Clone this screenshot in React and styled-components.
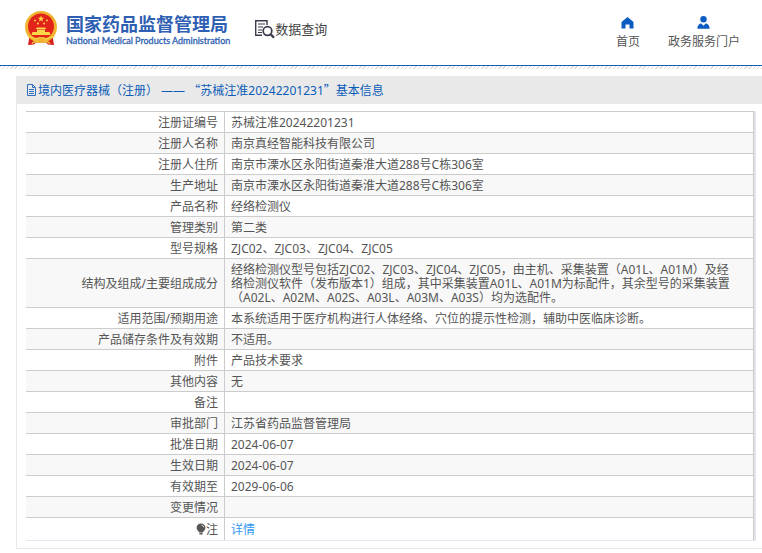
import React from "react";
import styled, { createGlobalStyle } from "styled-components";

const GlobalStyle = createGlobalStyle`
  *, *::before, *::after { box-sizing: border-box; }
  body {
    margin: 0;
    background: #fff;
    color: #555;
    font: 12px/14px "Noto Sans", "Noto Sans CJK SC", sans-serif;
    text-spacing-trim: space-all;
  }
`;

const Header = styled.header`
  display: flex;
  align-items: flex-start;
  justify-content: space-between;
  height: 66px;
  padding: 11px 22px 0 24px;
  border-bottom: 1px solid #1560b4;
`;

const Hatch = styled.div`
  height: 3px;
  background: repeating-linear-gradient(135deg, #e2dcd9 0 1px, #fff 1px 3px);
`;

const Brand = styled.div`
  display: flex;
  align-items: flex-start;
`;

const HomeLink = styled.a`
  display: flex;
  gap: 8px;
  color: #2f5fb3;
  text-decoration: none;
`;

const Names = styled.span`
  display: flex;
  flex-direction: column;
  padding-top: 2px;
`;

const AgencyName = styled.span`
  font-size: 18px;
  line-height: 22px;
  font-weight: 700;
  white-space: nowrap;
`;

const AgencyLatin = styled.span`
  font: 9px/12px Lato, "Liberation Sans", sans-serif;
  -webkit-text-stroke: 0.3px currentColor;
  white-space: nowrap;
`;

const Section = styled.div`
  display: flex;
  align-items: center;
  margin-left: 25px;
  padding-top: 8px;
  color: #444;
  font-size: 13px;
  line-height: 20px;
  white-space: nowrap;
`;

const Nav = styled.nav`
  display: flex;
  gap: 28px;
  padding-top: 5px;
`;

const NavLink = styled.a`
  display: flex;
  flex-direction: column;
  align-items: center;
  gap: 6px;
  color: #555;
  text-decoration: none;
  white-space: nowrap;
`;

const Panel = styled.main`
  margin: 7px 0 0 16px;
  padding-bottom: 7px;
  border-left: 1px solid #e9e9e9;
  border-bottom: 1px solid #e9e9e9;
`;

const Title = styled.h1`
  display: flex;
  align-items: center;
  gap: 1px;
  height: 28px;
  margin: 0 0 7px;
  padding: 0 0 0 9px;
  background: #e9e9e9;
  color: #0b5cb8;
  font-size: 12px;
  font-weight: 400;
  white-space: pre;
`;

const WideMark = styled.span`
  font-family: "Noto Sans CJK SC", sans-serif;
`;

const TableFrame = styled.div`
  margin: 0 6px 0 9px;
  border-right: 2px solid #e3e3ee;
  border-bottom: 1px solid #e8e8f2;
`;

const Table = styled.table`
  width: 100%;
  table-layout: fixed;
  border-spacing: 0;
  border-right: 1px solid #ccc;
`;

const Row = styled.tr`
  height: ${(p) => (p.$last ? 23 : 21)}px;
  background: ${(p) => (p.$shaded ? "#f8f8f8" : "#fff")};
`;

const Label = styled.th`
  width: 199px;
  padding: 4px 6px 2px;
  border-top: 1px solid #ccc;
  border-right: 1px solid #ccc;
  font-weight: 400;
  text-align: right;
`;

const Value = styled.td`
  padding: 4px 16px 2px 6px;
  border-top: 1px solid #ccc;
`;

const DetailLink = styled.a`
  color: #3399f3;
  text-decoration: none;
`;

const BulbIcon = styled.svg`
  vertical-align: -1px;
`;

const rows = [
  ["注册证编号", "苏械注准20242201231"],
  ["注册人名称", "南京真经智能科技有限公司"],
  ["注册人住所", "南京市溧水区永阳街道秦淮大道288号C栋306室"],
  ["生产地址", "南京市溧水区永阳街道秦淮大道288号C栋306室"],
  ["产品名称", "经络检测仪"],
  ["管理类别", "第二类"],
  ["型号规格", "ZJC02、ZJC03、ZJC04、ZJC05"],
  [
    "结构及组成/主要组成成分",
    "经络检测仪型号包括ZJC02、ZJC03、ZJC04、ZJC05，由主机、采集装置（A01L、A01M）及经络检测仪软件（发布版本1）组成，其中采集装置A01L、A01M为标配件，其余型号的采集装置（A02L、A02M、A02S、A03L、A03M、A03S）均为选配件。",
  ],
  ["适用范围/预期用途", "本系统适用于医疗机构进行人体经络、穴位的提示性检测，辅助中医临床诊断。"],
  ["产品储存条件及有效期", "不适用。"],
  ["附件", "产品技术要求"],
  ["其他内容", "无"],
  ["备注", ""],
  ["审批部门", "江苏省药品监督管理局"],
  ["批准日期", "2024-06-07"],
  ["生效日期", "2024-06-07"],
  ["有效期至", "2029-06-06"],
  ["变更情况", ""],
];

const Emblem = () => (
  <svg width="34" height="35" viewBox="0 0 33 35" aria-hidden="true">
    <path d="M5 25 3.5 34l6-.5 2-2h10l2 2 6 .5L28 25Z" fill="#d8201c" />
    <circle cx="16.5" cy="16" r="16" fill="#efb32f" />
    <circle cx="16.5" cy="15.5" r="13" fill="#e2231a" />
    <path
      d="m16.5 4.6.9 2.1 2.3.1-1.8 1.5.6 2.2-2-1.2-2 1.2.6-2.2-1.8-1.5 2.3-.1Z"
      fill="#fbd64b"
    />
    <g fill="#fbd64b">
      <circle cx="10.5" cy="9.5" r="1" />
      <circle cx="22.5" cy="9.5" r="1" />
      <circle cx="13.4" cy="12.6" r="1" />
      <circle cx="19.6" cy="12.6" r="1" />
      <path d="M12.5 16.5h8l1.5 1.5H11ZM12.5 18.5h8V21h-8ZM8 21h17l1 3H7Z" />
    </g>
    <path
      d="M3.5 25.5c4 0 5.5 2.5 8.500 2.5 2-1.5 7-1.5 9 0 3 0 4.500-2.5 8.500-2.5"
      fill="none"
      stroke="#f6c63e"
      strokeWidth="2"
    />
    <circle cx="16.5" cy="29" r="2.4" fill="#efb32f" />
    <path
      d="M7.5 32.5c2-2.5 4-1 6-2.5M25.5 32.5c-2-2.5-4-1-6-2.5"
      fill="none"
      stroke="#f6c63e"
      strokeWidth="1.5"
    />
  </svg>
);

const SearchDocIcon = () => (
  <svg width="20" height="20" viewBox="0 0 20 20" fill="none" stroke="#3b3b4d" aria-hidden="true">
    <path d="M12 6V1.7H.7v14.6H7" strokeWidth="1.4" />
    <path d="M3 5h7M3 8h5M3 11h4M3 13.5h4" strokeWidth="1.2" />
    <circle cx="12.5" cy="12" r="4.3" strokeWidth="1.7" />
    <path d="m15.7 15.2 3.3 3.6" strokeWidth="2.4" />
  </svg>
);

const HouseIcon = () => (
  <svg width="13" height="13" viewBox="0 0 13 13" fill="#0b5cc0" aria-hidden="true">
    <path d="M6.5 1 12.5 6v6.5h-4v-4h-4v4h-4V6Z" />
  </svg>
);

const PersonIcon = () => (
  <svg width="13" height="13" viewBox="0 0 13 13" fill="#0b5cc0" aria-hidden="true">
    <circle cx="6.5" cy="3.3" r="3.2" />
    <path d="M.5 12.8V11Q1 8.3 4 7.3l2.5 2.5L9 7.3q3 1 3.500 3.700v1.800Z" />
  </svg>
);

const PageIcon = () => (
  <svg width="11" height="12" viewBox="0 0 11 12" fill="none" stroke="#2f6fc0" aria-hidden="true">
    <path d="M1.5.5h5l3 3v8h-8ZM6.5.5v3h3M3 5.5h5M3 7.5h5M3 9.5h5" />
  </svg>
);

const Bulb = () => (
  <BulbIcon width="10" height="12" viewBox="0 0 10 12" aria-hidden="true">
    <path
      d="M5 .5a4.300 4.300 0 0 1 2.400 7.900L7 9.500H3l-.4-1.100A4.300 4.300 0 0 1 5 .5ZM3.500 10h3v1.500h-3Z"
      fill="#555"
    />
    <path d="M5.500 2q2 .3 2.200 2.300" fill="none" stroke="#ddd" />
  </BulbIcon>
);

export default function App() {
  return (
    <>
      <GlobalStyle />
      <Header>
        <Brand>
          <HomeLink href="#">
            <Emblem />
            <Names>
              <AgencyName>国家药品监督管理局</AgencyName>
              <AgencyLatin>National Medical Products Administration</AgencyLatin>
            </Names>
          </HomeLink>
          <Section>
            <SearchDocIcon />
            数据查询
          </Section>
        </Brand>
        <Nav>
          <NavLink href="#">
            <HouseIcon />
            首页
          </NavLink>
          <NavLink href="#">
            <PersonIcon />
            政务服务门户
          </NavLink>
        </Nav>
      </Header>
      <Hatch />
      <Panel>
        <Title>
          <PageIcon />
          <span>
            境内医疗器械（注册） —— <WideMark>“</WideMark>苏械注准20242201231
            <WideMark>”</WideMark>基本信息
          </span>
        </Title>
        <TableFrame>
          <Table>
            <tbody>
              {rows.map(([label, value], i) => (
                <Row key={label} $shaded={i % 2 === 1}>
                  <Label scope="row">{label}</Label>
                  <Value>{value}</Value>
                </Row>
              ))}
              <Row $last>
                <Label scope="row">
                  <Bulb />注
                </Label>
                <Value>
                  <DetailLink href="#">详情</DetailLink>
                </Value>
              </Row>
            </tbody>
          </Table>
        </TableFrame>
      </Panel>
    </>
  );
}
